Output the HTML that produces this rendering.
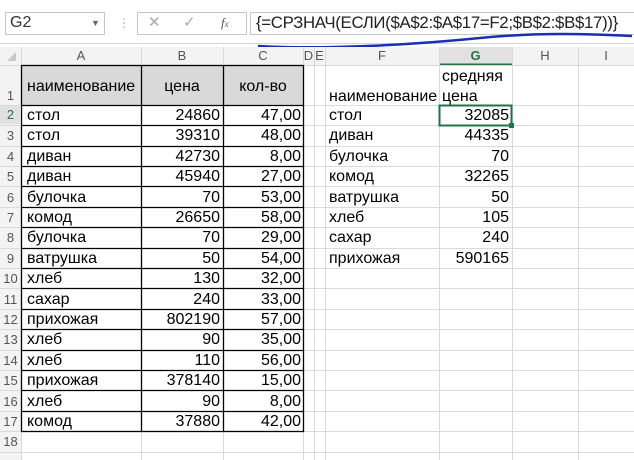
<!DOCTYPE html><html><head><meta charset="utf-8"><style>
body{margin:0;width:634px;height:460px;background:#fff;position:relative;overflow:hidden;font-family:"Liberation Sans",Arial,sans-serif;}
.a{position:absolute;box-sizing:border-box;}
.t{position:absolute;font-size:16px;color:#000;white-space:nowrap;line-height:20px;}
.h{position:absolute;font-size:13px;color:#555;text-align:center;line-height:18px;}
</style></head><body>
<div class="a" style="left:0;top:0;width:634px;height:44px;background:#fff;border-bottom:1px solid #d4d4d4"></div>
<div class="a" style="left:5px;top:12px;width:100px;height:23px;border:1px solid #c6c6c6"></div>
<div class="t" style="left:10px;top:13px;font-size:16px;color:#333">G2</div>
<div class="t" style="left:91px;top:13px;font-size:9px;color:#666">▼</div>
<div class="t" style="left:118px;top:13px;font-size:12px;color:#aaa">⋮</div>
<div class="a" style="left:137px;top:12px;width:110px;height:23px;border:1px solid #c6c6c6"></div>
<div class="t" style="left:148px;top:13px;font-size:15px;color:#aaa">✕</div>
<div class="t" style="left:183px;top:13px;font-size:15px;color:#aaa">✓</div>
<div class="t" style="left:221px;top:13px;font-size:13px;color:#555;font-style:italic;font-family:'Liberation Serif',serif">f<span style="font-size:9px">x</span></div>
<div class="a" style="left:250px;top:12px;width:390px;height:23px;border:1px solid #c6c6c6"></div>
<div class="t" style="left:256px;top:13px;font-size:16.8px;color:#222;letter-spacing:-0.3px">{=СРЗНАЧ(ЕСЛИ($A$2:$A$17=F2;$B$2:$B$17))}</div>
<svg class="a" style="left:0;top:0" width="634" height="60"><path d="M258 46 C 330 50, 420 44, 480 38 S 590 34, 632 36" stroke="#1a2fb5" stroke-width="2.5" fill="none"/></svg>
<svg class="a" style="left:0;top:0" width="634" height="460">
<rect x="0" y="47" width="634" height="18" fill="#f3f3f3"/>
<rect x="0" y="47" width="21" height="413" fill="#f3f3f3"/>
<rect x="439" y="47" width="73" height="18" fill="#e1e1e1"/>
<line x1="439" y1="64.5" x2="512" y2="64.5" stroke="#217346" stroke-width="2"/>
<rect x="21" y="65" width="282" height="40" fill="#d9d9d9"/>
<g stroke="#dadada" stroke-width="1">
<line x1="21.5" y1="47" x2="21.5" y2="460"/><line x1="141.5" y1="47" x2="141.5" y2="460"/><line x1="223.5" y1="47" x2="223.5" y2="460"/><line x1="303.5" y1="47" x2="303.5" y2="460"/><line x1="314.5" y1="47" x2="314.5" y2="460"/><line x1="325.5" y1="47" x2="325.5" y2="460"/><line x1="439.5" y1="47" x2="439.5" y2="460"/><line x1="512.5" y1="47" x2="512.5" y2="460"/><line x1="578.5" y1="47" x2="578.5" y2="460"/>
<line x1="0" y1="65.5" x2="634" y2="65.5"/>
<line x1="0" y1="105.5" x2="634" y2="105.5"/>
<line x1="0" y1="125.5" x2="634" y2="125.5"/><line x1="0" y1="146.5" x2="634" y2="146.5"/><line x1="0" y1="166.5" x2="634" y2="166.5"/><line x1="0" y1="186.5" x2="634" y2="186.5"/><line x1="0" y1="207.5" x2="634" y2="207.5"/><line x1="0" y1="227.5" x2="634" y2="227.5"/><line x1="0" y1="248.5" x2="634" y2="248.5"/><line x1="0" y1="268.5" x2="634" y2="268.5"/><line x1="0" y1="288.5" x2="634" y2="288.5"/><line x1="0" y1="309.5" x2="634" y2="309.5"/><line x1="0" y1="329.5" x2="634" y2="329.5"/><line x1="0" y1="350.5" x2="634" y2="350.5"/><line x1="0" y1="370.5" x2="634" y2="370.5"/><line x1="0" y1="390.5" x2="634" y2="390.5"/><line x1="0" y1="411.5" x2="634" y2="411.5"/><line x1="0" y1="431.5" x2="634" y2="431.5"/><line x1="0" y1="452.5" x2="634" y2="452.5"/>
</g>
<g stroke="#000" stroke-width="1.3" fill="none">
<rect x="21.5" y="65.5" width="282" height="366"/>
<line x1="141.5" y1="65" x2="141.5" y2="431"/><line x1="223.5" y1="65" x2="223.5" y2="431"/>
<line x1="21" y1="105.5" x2="303" y2="105.5"/><line x1="21" y1="125.5" x2="303" y2="125.5"/><line x1="21" y1="146.5" x2="303" y2="146.5"/><line x1="21" y1="166.5" x2="303" y2="166.5"/><line x1="21" y1="186.5" x2="303" y2="186.5"/><line x1="21" y1="207.5" x2="303" y2="207.5"/><line x1="21" y1="227.5" x2="303" y2="227.5"/><line x1="21" y1="248.5" x2="303" y2="248.5"/><line x1="21" y1="268.5" x2="303" y2="268.5"/><line x1="21" y1="288.5" x2="303" y2="288.5"/><line x1="21" y1="309.5" x2="303" y2="309.5"/><line x1="21" y1="329.5" x2="303" y2="329.5"/><line x1="21" y1="350.5" x2="303" y2="350.5"/><line x1="21" y1="370.5" x2="303" y2="370.5"/><line x1="21" y1="390.5" x2="303" y2="390.5"/><line x1="21" y1="411.5" x2="303" y2="411.5"/>
</g>
<rect x="439.5" y="105.5" width="72" height="20" fill="none" stroke="#217346" stroke-width="2"/>
<rect x="509" y="123" width="5" height="5" fill="#217346"/>
<path d="M16 61 L16 52 L7 61Z" fill="#c8c8c8"/>
</svg>
<div class="h" style="left:21px;top:47px;width:120px">A</div>
<div class="h" style="left:141px;top:47px;width:82px">B</div>
<div class="h" style="left:223px;top:47px;width:80px">C</div>
<div class="h" style="left:303px;top:47px;width:11px">D</div>
<div class="h" style="left:314px;top:47px;width:11px">E</div>
<div class="h" style="left:325px;top:47px;width:114px">F</div>
<div class="h" style="left:439px;top:47px;width:73px;color:#217346;font-weight:bold">G</div>
<div class="h" style="left:512px;top:47px;width:66px">H</div>
<div class="h" style="left:578px;top:47px;width:56px">I</div>
<div class="h" style="left:0;top:87px;width:21px">1</div>
<div class="h" style="left:0;top:106px;width:21px;color:#217346;background:#e1e1e1">2</div>
<div id="rn"></div>
<div class="t" style="left:27px;top:77px">наименование</div>
<div class="t" style="left:141px;top:77px;width:82px;text-align:center">цена</div>
<div class="t" style="left:223px;top:77px;width:80px;text-align:center">кол-во</div>
<div class="t" style="left:329px;top:87px">наименование</div>
<div class="t" style="left:442px;top:67px">средняя</div>
<div class="t" style="left:442px;top:87px">цена</div>
<script>
var A=[["стол",24860,"47,00"],["стол",39310,"48,00"],["диван",42730,"8,00"],["диван",45940,"27,00"],["булочка",70,"53,00"],["комод",26650,"58,00"],["булочка",70,"29,00"],["ватрушка",50,"54,00"],["хлеб",130,"32,00"],["сахар",240,"33,00"],["прихожая",802190,"57,00"],["хлеб",90,"35,00"],["хлеб",110,"56,00"],["прихожая",378140,"15,00"],["хлеб",90,"8,00"],["комод",37880,"42,00"]];
var F=[["стол",32085],["диван",44335],["булочка",70],["комод",32265],["ватрушка",50],["хлеб",105],["сахар",240],["прихожая",590165]];
var s="";
for(var i=0;i<17;i++){var y=Math.round(106+i*20.4);
if(i>0)s+='<div class="h" style="left:0;top:'+(y+1)+'px;width:21px">'+(i+2)+'</div>';
if(i<16){var r=A[i];s+='<div class="t" style="left:27px;top:'+y+'px">'+r[0]+'</div><div class="t" style="left:141px;top:'+y+'px;width:79px;text-align:right">'+r[1]+'</div><div class="t" style="left:223px;top:'+y+'px;width:78px;text-align:right">'+r[2]+'</div>';}
if(i<8){s+='<div class="t" style="left:329px;top:'+y+'px">'+F[i][0]+'</div><div class="t" style="left:439px;top:'+y+'px;width:70px;text-align:right">'+F[i][1]+'</div>';}}
document.getElementById("rn").innerHTML=s;
</script>
</body></html>
